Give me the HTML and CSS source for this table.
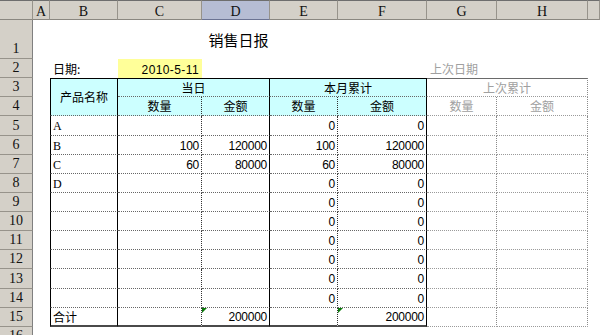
FILE: index.html
```html
<!DOCTYPE html>
<html lang="zh">
<head>
<meta charset="utf-8">
<title>销售日报</title>
<link rel="stylesheet" href="styles.css">
</head>
<body>
<div class="sheet">
  <div class="ch corner"></div><div class="ch">A</div><div class="ch">B</div><div class="ch">C</div><div class="ch sel">D</div><div class="ch">E</div><div class="ch">F</div><div class="ch">G</div><div class="ch">H</div><div class="ch"></div>

  <div class="rh">1</div><div></div><div class="title">销售日报</div><div></div><div></div><div></div>

  <div class="rh">2</div><div></div><div class="lbl">日期:</div><div class="num yellow date">2010-5-11</div><div></div><div></div><div></div><div class="lbl gray">上次日期</div><div></div><div></div>

  <div class="rh">3</div><div></div>
  <div class="c bl bt sb cy hd merge-b">产品名称</div>
  <div class="c bt sb cy hd span2">当日</div>
  <div class="c bt sb cy hd span2">本月累计</div>
  <div class="g gt hd gray span2">上次累计</div>
  <div></div>

  <div class="rh">4</div><div></div>
  <div class="c cy hd">数量</div><div class="c cy hd sb">金额</div>
  <div class="c cy hd">数量</div><div class="c cy hd sb">金额</div>
  <div class="g hd gray">数量</div><div class="g hd gray">金额</div>
  <div></div>

  <div class="rh">5</div><div></div><div class="c bl sb txt">A</div><div class="c num"></div><div class="c num sb"></div><div class="c num">0</div><div class="c num sb">0</div><div class="g"></div><div class="g"></div><div></div>
  <div class="rh">6</div><div></div><div class="c bl sb txt">B</div><div class="c num">100</div><div class="c num sb">120000</div><div class="c num">100</div><div class="c num sb">120000</div><div class="g"></div><div class="g"></div><div></div>
  <div class="rh">7</div><div></div><div class="c bl sb txt">C</div><div class="c num">60</div><div class="c num sb">80000</div><div class="c num">60</div><div class="c num sb">80000</div><div class="g"></div><div class="g"></div><div></div>
  <div class="rh">8</div><div></div><div class="c bl sb txt">D</div><div class="c num"></div><div class="c num sb"></div><div class="c num">0</div><div class="c num sb">0</div><div class="g"></div><div class="g"></div><div></div>
  <div class="rh">9</div><div></div><div class="c bl sb txt"></div><div class="c num"></div><div class="c num sb"></div><div class="c num">0</div><div class="c num sb">0</div><div class="g"></div><div class="g"></div><div></div>
  <div class="rh">10</div><div></div><div class="c bl sb txt"></div><div class="c num"></div><div class="c num sb"></div><div class="c num">0</div><div class="c num sb">0</div><div class="g"></div><div class="g"></div><div></div>
  <div class="rh">11</div><div></div><div class="c bl sb txt"></div><div class="c num"></div><div class="c num sb"></div><div class="c num">0</div><div class="c num sb">0</div><div class="g"></div><div class="g"></div><div></div>
  <div class="rh">12</div><div></div><div class="c bl sb txt"></div><div class="c num"></div><div class="c num sb"></div><div class="c num">0</div><div class="c num sb">0</div><div class="g"></div><div class="g"></div><div></div>
  <div class="rh">13</div><div></div><div class="c bl sb txt"></div><div class="c num"></div><div class="c num sb"></div><div class="c num">0</div><div class="c num sb">0</div><div class="g"></div><div class="g"></div><div></div>
  <div class="rh">14</div><div></div><div class="c bl sb txt"></div><div class="c num"></div><div class="c num sb"></div><div class="c num">0</div><div class="c num sb">0</div><div class="g"></div><div class="g"></div><div></div>
  <div class="rh">15</div><div></div><div class="c bl sb txt cjk last">合计</div><div class="c num last"></div><div class="c num sb last tri">200000</div><div class="c num last"></div><div class="c num sb last tri">200000</div><div class="g"></div><div class="g"></div><div></div>
  <div class="rh">16</div><div></div><div></div><div></div><div></div><div></div><div></div><div></div><div></div><div></div>
</div>
</body>
</html>
```
FILE: styles.css
```css
html, body {
  margin: 0;
  padding: 0;
  background: #fff;
  overflow: hidden;
}

.sheet {
  display: grid;
  grid-template-columns: 33px 17px 68px 84px 68px 68px 89px 70px 91px 12px;
  grid-template-rows: 20px 39px repeat(15, 19.14px);
  width: 600px;
  height: 335px;
  overflow: hidden;
  font-family: "Noto Sans CJK SC", sans-serif;
  font-size: 12px;
  color: #000;
}

.sheet > div {
  box-sizing: border-box;
  display: flex;
  align-items: center;
  min-width: 0;
  white-space: nowrap;
  line-height: 1;
}

/* column headers */
.ch {
  background: #d4d0c8;
  border-top: 1px solid #6e6e6e;
  border-bottom: 1px solid #8a8780;
  border-right: 1px solid #97938b;
  justify-content: center;
  font-family: "Liberation Serif", serif;
  font-size: 14px;
  padding-top: 3px;
  color: #111;
}
.ch.sel {
  background: #b6bdd4;
  border-bottom-color: #6b7393;
}

/* row headers */
.sheet > .rh {
  background: #d4d0c8;
  border-right: 1px solid #808080;
  border-bottom: 1px solid #97938b;
  justify-content: center;
  align-items: flex-end;
  padding-bottom: 2px;
  font-family: "Liberation Serif", serif;
  font-size: 14px;
  color: #111;
}

.title {
  grid-column: span 5;
  justify-content: center;
  font-size: 15px;
}

.lbl {
  padding-left: 3px;
}

.gray { color: #a0a0a0; }

.yellow { background: #ffff99; }

/* table cells */
.c {
  border-right: 1px dotted #333;
  border-bottom: 1px dotted #666;
}
.sb { border-right: 1px solid #000; }
.bl { border-left: 1px solid #000; }
.bt { border-top: 1px solid #000; }
.cy { background: #ccffff; }
.hd { justify-content: center; }
.span2 { grid-column: span 2; }
.merge-b { grid-row: span 2; }

.sheet > .last { border-bottom: 2px solid #4a4a4a; }

.g {
  border-right: 1px dotted #8a8a8a;
  border-bottom: 1px dotted #9a9a9a;
}
.gt { border-top: 1px solid #6a6a6a; }

.txt {
  padding-left: 2px;
  font-family: "Liberation Serif", serif;
  font-size: 12px;
  padding-top: 2px;
}
.txt.cjk {
  font-family: "Noto Sans CJK SC", sans-serif;
}

.num {
  justify-content: flex-end;
  padding-right: 2px;
  padding-top: 2px;
  font-family: "Liberation Sans", sans-serif;
  font-size: 12px;
  letter-spacing: -0.25px;
}
.date {
  letter-spacing: 0.4px;
  padding-right: 3px;
}

.tri { position: relative; }
.tri::before {
  content: "";
  position: absolute;
  left: 0;
  top: 0;
  border-top: 5px solid #0a7a0a;
  border-right: 5px solid transparent;
}
```
